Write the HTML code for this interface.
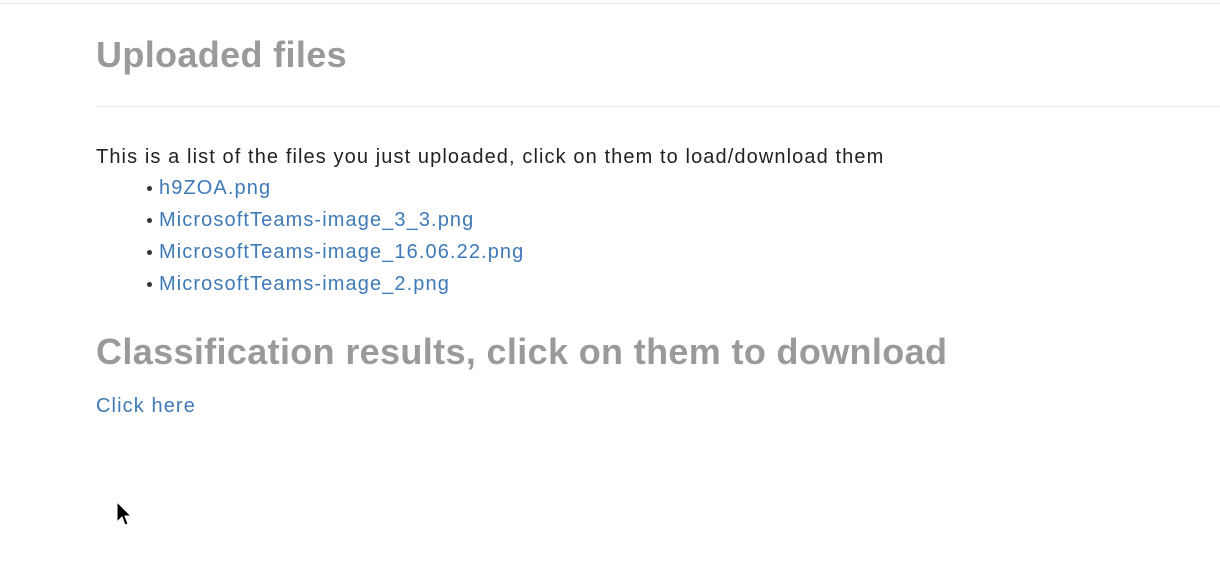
<!DOCTYPE html>
<html><head><meta charset="utf-8"><style>
html,body{margin:0;padding:0;background:#fff;width:1220px;height:570px;overflow:hidden;position:relative;font-family:"Liberation Sans",Arial,sans-serif;}
.a{position:absolute;white-space:nowrap;}
h1{margin:0;font-size:36px;font-weight:bold;color:#9a9a9a;line-height:40px;letter-spacing:0.35px;}
.t{font-size:20px;line-height:24px;color:#222;letter-spacing:1.1px;}
.l{font-size:20px;line-height:24px;color:#3f7ab8;letter-spacing:1.1px;}
.b{position:absolute;width:5px;height:5px;border-radius:50%;background:#333;}
</style></head><body>
<div class="a" style="left:0;top:3px;width:1220px;height:1px;background:#e8e8e8"></div>
<h1 class="a" style="left:96px;top:35px">Uploaded files</h1>
<div class="a" style="left:96px;top:106px;width:1124px;height:1px;background:#e8e8e8"></div>
<div class="a t" style="left:96px;top:145px">This is a list of the files you just uploaded, click on them to load/download them</div>
<div class="b" style="left:147px;top:186px"></div><div class="a l" style="left:159px;top:176px">h9ZOA.png</div>
<div class="b" style="left:147px;top:218px"></div><div class="a l" style="left:159px;top:208px">MicrosoftTeams-image_3_3.png</div>
<div class="b" style="left:147px;top:250px"></div><div class="a l" style="left:159px;top:240px">MicrosoftTeams-image_16.06.22.png</div>
<div class="b" style="left:147px;top:282px"></div><div class="a l" style="left:159px;top:272px">MicrosoftTeams-image_2.png</div>
<h1 class="a" style="left:96px;top:332px">Classification results, click on them to download</h1>
<div class="a l" style="left:96px;top:394px">Click here</div>
<svg class="a" style="left:115px;top:500px" width="16" height="26" viewBox="0 0 16 26"><path d="M2 2 L2 22 L7 17 L10 25 L13 24 L10 16 L16 16 Z" fill="#000" stroke="#fff" stroke-width="1"/></svg>
</body></html>
